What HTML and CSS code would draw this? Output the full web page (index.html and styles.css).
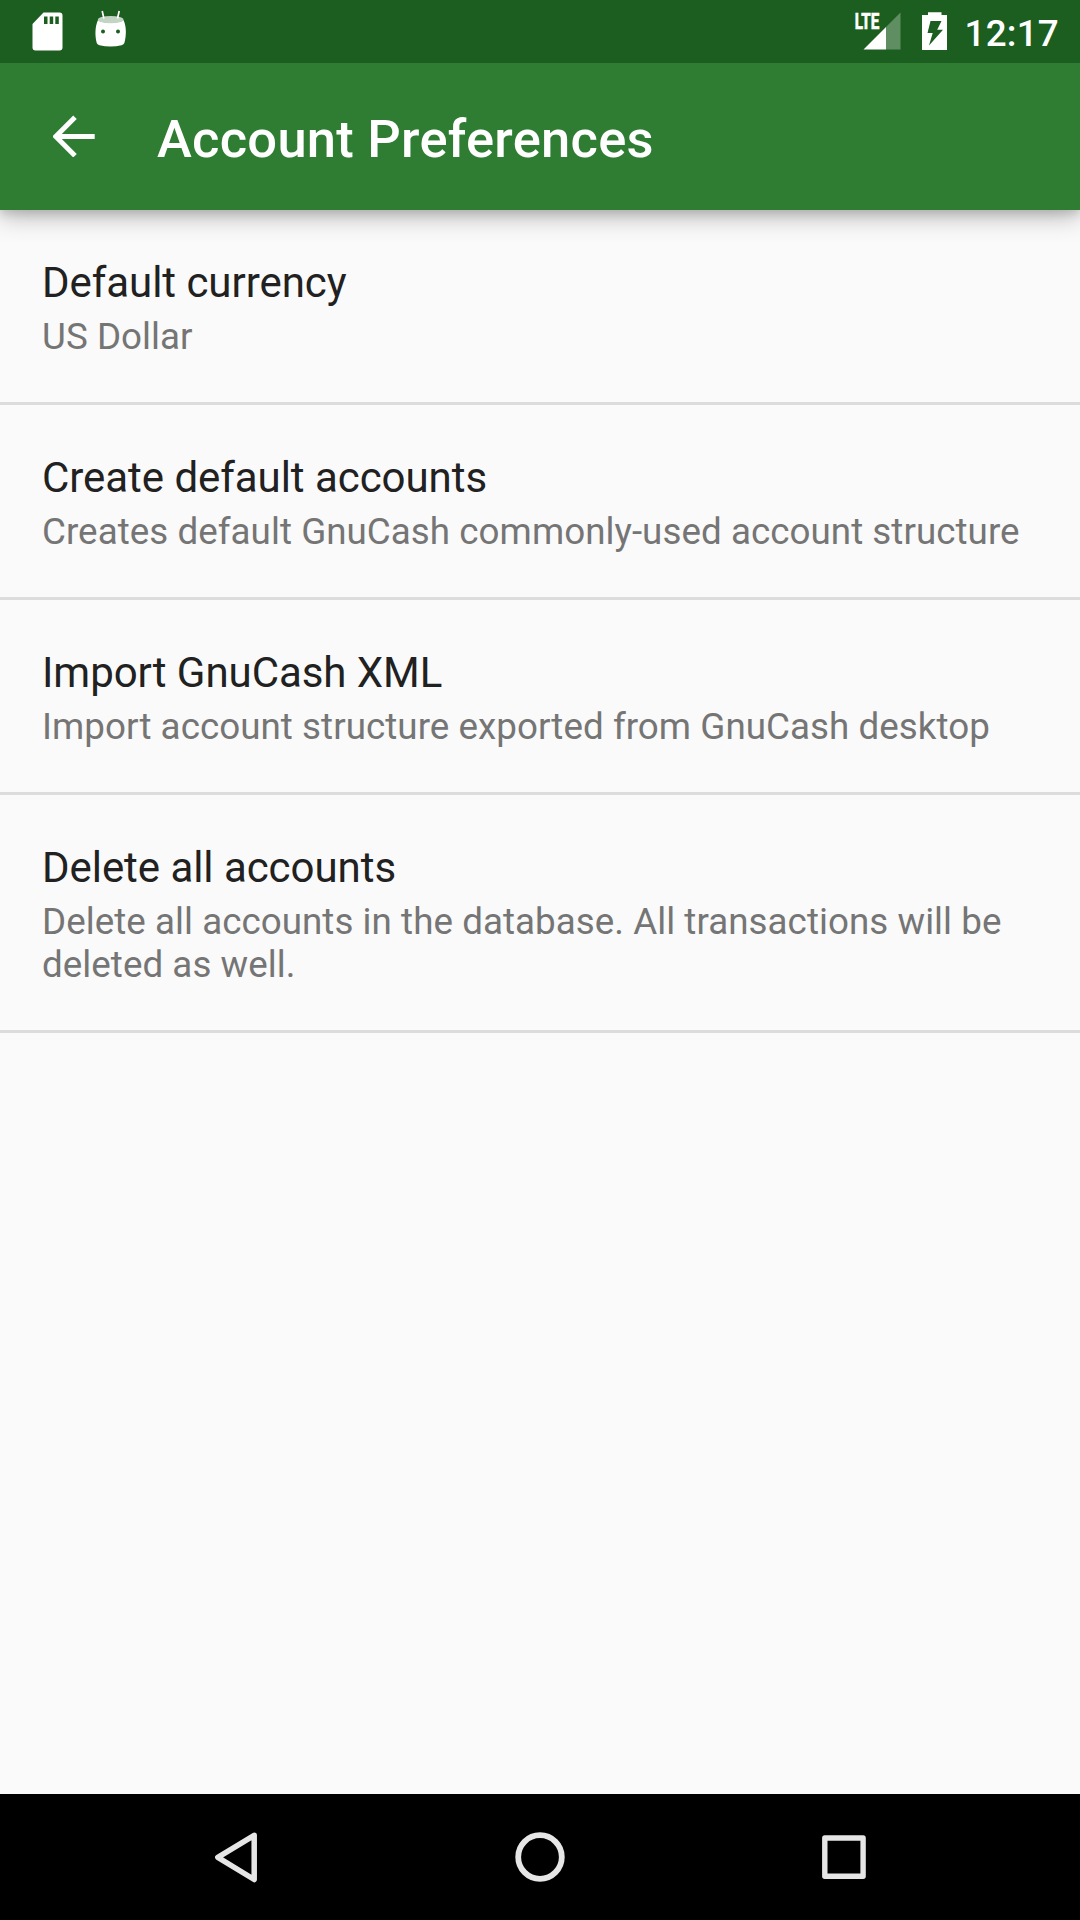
FILE: index.html
```html
<!DOCTYPE html>
<html lang="en">
<head>
<meta charset="utf-8">
<title>Account Preferences</title>
<link rel="stylesheet" href="styles.css">
</head>
<body>
<div class="screen">
  <div class="status">
    <svg width="100" height="63" viewBox="30 0 100 63" aria-hidden="true">
      <path fill="#fff" fill-rule="evenodd" d="M43.5 12.5H59.500a3 3 0 0 1 3 3v32a3 3 0 0 1-3 3H35.500a3 3 0 0 1-3-3V24zM44 16.500v7.500h3.500v-7.500zM49.700 16.500v7.500h3.500v-7.500zM55.300 16.500v7.500h3.500v-7.500z"/>
      <path fill="#fff" d="M98 20c3 3.500 22 3.500 25.500 0 3 6.500 3 15 1 22.500-.5 1.800-1.500 2.300-3 2.700-7 1.700-15 1.700-22 0-1.500-.4-2.500-1-2.900-2.700-1.800-7.500-1.600-16 1.400-22.500z"/>
      <ellipse cx="110.700" cy="19.600" rx="12.800" ry="3.600" fill="#c3d4c4"/>
      <path stroke="#fff" stroke-width="1.700" d="M102.200 11l1.700 7.500M119.200 11l-1.700 7.500"/>
      <circle cx="103" cy="31.500" r="2" fill="#1b5e20"/><circle cx="118" cy="31.500" r="2" fill="#1b5e20"/>
    </svg>
    <div class="status-right">
      <svg width="100" height="63" viewBox="850 0 100 63" aria-hidden="true">
        <text class="lte" x="854.800" y="29" textLength="24.500" lengthAdjust="spacingAndGlyphs">LTE</text>
        <path fill="#fff" d="M863.500 49.500L886 27v22.500z"/>
        <path fill="#fff" fill-opacity=".3" d="M886 49.500V27l14.500-14.500v37z"/>
        <path fill="#fff" fill-rule="evenodd" d="M928 12.300h13.500V15H947v35h-25V15h6zM930.500 21l-3 12h5.200L929 45.500 943 29.700H937.200L941.500 21z"/>
      </svg>
      <span class="clock">12:17</span>
    </div>
  </div>
  <header class="toolbar">
    <svg width="42" height="42" viewBox="0 0 42 42" fill="none" stroke="#fff" stroke-width="5" aria-hidden="true"><path d="M41.700 21.500H4M22 2.300L2.800 21.500 22 40.700"/></svg>
    <h1>Account Preferences</h1>
  </header>
  <main>
    <section class="item"><h2>Default currency</h2><p>US Dollar</p></section>
    <section class="item"><h2>Create default accounts</h2><p>Creates default GnuCash commonly-used account structure</p></section>
    <section class="item"><h2>Import GnuCash XML</h2><p>Import account structure exported from GnuCash desktop</p></section>
    <section class="item"><h2>Delete all accounts</h2><p>Delete all accounts in the database. All transactions will be deleted as well.</p></section>
  </main>
  <nav class="navbar">
    <svg width="1080" height="126" viewBox="0 0 1080 126" fill="none" stroke="#e6e6e6" stroke-linejoin="round" aria-label="Navigation">
      <path stroke-width="5.500" d="M254.200 41.300L217.800 63.300l36.400 22.200z"/>
      <circle cx="540" cy="63" r="21.800" stroke-width="5.800"/>
      <rect x="824.800" y="44" width="38.300" height="38.300" stroke-width="5.400"/>
    </svg>
  </nav>
</div>
</body>
</html>
```
FILE: styles.css
```css
* { box-sizing: border-box; margin: 0; padding: 0; }
body { font-family: Roboto, sans-serif; background: #fafafa; }
svg { display: block; flex: none; }
.screen { width: 1080px; height: 1920px; display: flex; flex-direction: column; overflow: hidden; }
.status { height: 63px; flex: none; background: #1b5e20; display: flex; justify-content: space-between; padding: 0 21px 0 30px; position: relative; z-index: 1; }
.status-right { display: flex; gap: 15px; }
.clock { color: #fff; font-size: 36.75px; font-weight: 500; line-height: 43px; padding-top: 12px; letter-spacing: 0.25px; }
.lte { font: 700 22px Roboto, sans-serif; fill: #fff; stroke: #fff; stroke-width: 0.7px; }
.toolbar { height: 147px; flex: none; background: #2e7d32; display: flex; gap: 62px; padding: 52px 0 0 53px; position: relative; box-shadow: 0 6px 24px rgba(0,0,0,.28), 0 4px 9px rgba(0,0,0,.12); }
h1 { color: #fff; font-size: 52.5px; font-weight: 500; line-height: 62px; margin-top: -7px; letter-spacing: 0.25px; }
main { flex: 1; }
.item { padding: 48px 42px 44px; border-bottom: 3px solid #dcdcdc; }
h2 { font-size: 42px; font-weight: 400; line-height: 49px; color: #212121; letter-spacing: -0.05px; }
p { margin-top: 8px; font-size: 36.75px; line-height: 43px; color: #757575; letter-spacing: 0.045px; }
.navbar { height: 126px; flex: none; background: #000; }
```
